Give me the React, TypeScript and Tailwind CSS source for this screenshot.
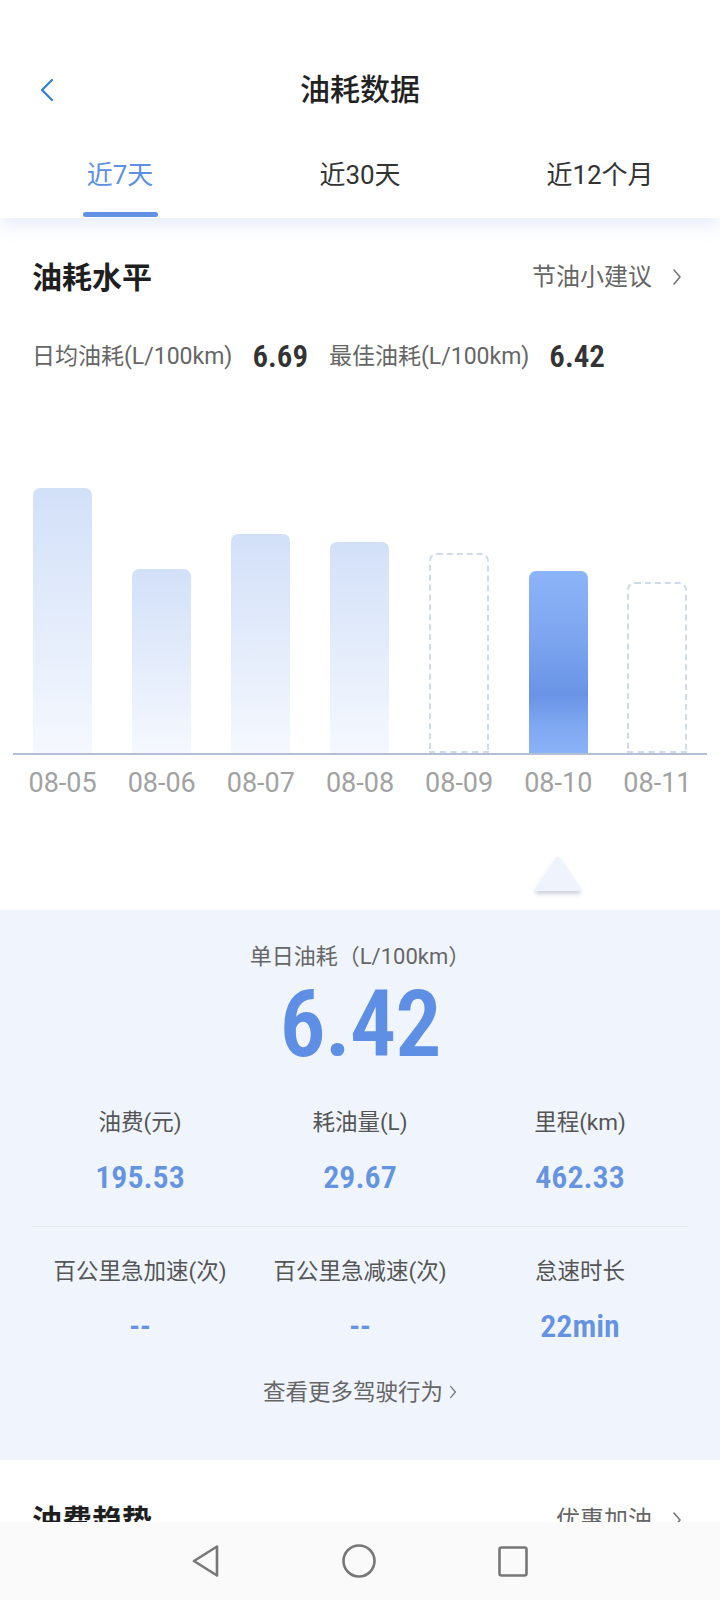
import React from "react";

const bars = [
  { date: "08-05", h: 265, kind: "light" },
  { date: "08-06", h: 184, kind: "light" },
  { date: "08-07", h: 219, kind: "light" },
  { date: "08-08", h: 211, kind: "light" },
  { date: "08-09", h: 200, kind: "empty" },
  { date: "08-10", h: 182, kind: "active" },
  { date: "08-11", h: 171, kind: "empty" },
];

const tabs = ["近7天", "近30天", "近12个月"];

function Chevron({ className }: { className?: string }) {
  return (
    <svg viewBox="0 0 10 18" className={className} fill="none" stroke="currentColor" strokeWidth="1.6" strokeLinecap="round" strokeLinejoin="round">
      <path d="M2 2l6 7-6 7" />
    </svg>
  );
}

function Stat({ label, value }: { label: string; value: string }) {
  return (
    <div className="flex flex-col items-center">
      <div className="text-[22.5px] leading-[32px] text-[#555]">{label}</div>
      <div className="mt-[19px] text-[32px] leading-[40px] font-semibold text-[#6693e0] font-['Roboto_Condensed','Liberation_Sans_Narrow','Roboto',sans-serif]">
        {value}
      </div>
    </div>
  );
}

export default function App() {
  return (
    <div className="w-[720px] h-[1600px] flex flex-col bg-white overflow-hidden font-['Roboto','Noto_Sans_CJK_SC',sans-serif]">
      <div className="h-[1522px] overflow-hidden flex flex-col">
        {/* Header + tabs */}
        <div className="relative z-10 bg-white shadow-[0_8px_16px_rgba(205,216,238,0.45)]">
          <div className="h-[50px]" />
          <div className="h-[80px] grid grid-cols-[1fr_auto_1fr] items-center">
            <div className="pl-[40px] text-[#2f7fd6]">
              <svg viewBox="0 0 14 24" className="w-[14px] h-[24px]" fill="none" stroke="currentColor" strokeWidth="2.2" strokeLinecap="round" strokeLinejoin="round">
                <path d="M12 2L2 12l10 10" />
              </svg>
            </div>
            <div className="text-[30px] leading-[40px] font-medium text-[#222]">油耗数据</div>
            <div />
          </div>
          <div className="h-[88px] grid grid-cols-3">
            {tabs.map((t, i) => (
              <div key={t} className="flex flex-col items-center pt-[27px]">
                <div className={`text-[26px] leading-[36px] ${i === 0 ? "text-[#5d8fe3]" : "text-[#333]"}`}>{t}</div>
                <div className={`mt-[19px] h-[5px] w-[75px] rounded-full ${i === 0 ? "bg-[#6391e4]" : "bg-transparent"}`} />
              </div>
            ))}
          </div>
        </div>

        {/* 油耗水平 */}
        <div className="pl-[32px] pr-[38px] pt-[39px]">
          <div className="h-[40px] flex items-center justify-between">
            <div className="text-[30px] font-bold text-[#1f1f1f]">油耗水平</div>
            <div className="flex items-center gap-[20px] text-[#666]">
              <span className="text-[24px]">节油小建议</span>
              <Chevron className="w-[10px] h-[18px] text-[#777]" />
            </div>
          </div>
          <div className="mt-[40px] h-[40px] flex items-center">
            <span className="text-[23px] text-[#666]">日均油耗(L/100km)</span>
            <span className="ml-[20px] text-[31px] font-semibold text-[#333] font-['Roboto_Condensed','Liberation_Sans_Narrow','Roboto',sans-serif]">6.69</span>
            <span className="ml-[21px] text-[23px] text-[#666]">最佳油耗(L/100km)</span>
            <span className="ml-[20px] text-[31px] font-semibold text-[#333] font-['Roboto_Condensed','Liberation_Sans_Narrow','Roboto',sans-serif]">6.42</span>
          </div>
        </div>

        {/* Chart */}
        <div className="px-[13px]">
          <div className="h-[376px] grid grid-cols-7 items-end">
            {bars.map((b) => (
              <div key={b.date} className="flex justify-center">
                {b.kind === "light" && (
                  <div className="w-[59px] rounded-t-[7px] bg-gradient-to-b from-[#d2e0f8] to-[#f5f8fe]" style={{ height: b.h }} />
                )}
                {b.kind === "active" && (
                  <div className="w-[59px] rounded-t-[7px] bg-[linear-gradient(to_bottom,#8cb4f8_0%,#7ea6f0_35%,#6994e6_68%,#7fa8f2_85%,#8ab2f7_100%)]" style={{ height: b.h }} />
                )}
                {b.kind === "empty" && (
                  <div className="w-[60px] rounded-t-[8px] border-2 border-dashed border-[#cfdaeb]" style={{ height: b.h }} />
                )}
              </div>
            ))}
          </div>
          <div className="h-[2px] bg-[#b3bfd3]" />
          <div className="mt-[12px] grid grid-cols-7">
            {bars.map((b) => (
              <div key={b.date} className="text-center text-[27px] leading-[32px] text-[#a2a2a2] font-['Roboto',sans-serif]">
                {b.date}
              </div>
            ))}
          </div>
          <div className="mt-[51px] grid grid-cols-7">
            {bars.map((b) => (
              <div key={b.date} className="flex justify-center">
                {b.kind === "active" && (
                  <svg viewBox="0 0 56 60" className="w-[56px] h-[60px]">
                    <defs>
                      <filter id="tri" x="-30%" y="-30%" width="160%" height="170%">
                        <feDropShadow dx="0" dy="3" stdDeviation="2" floodColor="#8e99ad" floodOpacity="0.45" />
                      </filter>
                    </defs>
                    <path d="M26.3 7.5a2 2 0 0 1 3.4 0l21 31a1.5 1.5 0 0 1-1.2 2.4H6.5a1.5 1.5 0 0 1-1.2-2.4z" fill="#eef3fc" filter="url(#tri)" />
                  </svg>
                )}
              </div>
            ))}
          </div>
        </div>

        {/* Detail panel */}
        <div className="h-[550px] shrink-0 bg-[#f0f5fd] pt-[31px] flex flex-col items-center">
          <div className="text-[22px] leading-[32px] text-[#666]">单日油耗（L/100km）</div>
          <div className="mt-[6px] text-[92px] leading-none font-semibold text-[#5f8fe4] tracking-[-1px] font-['Roboto_Condensed','Liberation_Sans_Narrow','Roboto',sans-serif]">
            6.42
          </div>
          <div className="mt-[35px] w-full px-[30px] grid grid-cols-3">
            <Stat label="油费(元)" value="195.53" />
            <Stat label="耗油量(L)" value="29.67" />
            <Stat label="里程(km)" value="462.33" />
          </div>
          <div className="mt-[29px] w-full px-[32px]">
            <div className="h-px bg-[#e2e9f4]" />
          </div>
          <div className="mt-[28px] w-full px-[30px] grid grid-cols-3">
            <Stat label="百公里急加速(次)" value="--" />
            <Stat label="百公里急减速(次)" value="--" />
            <Stat label="怠速时长" value="22min" />
          </div>
          <div className="mt-[30px] flex items-center gap-[6px] text-[#666]">
            <span className="text-[22.5px] leading-[32px]">查看更多驾驶行为</span>
            <Chevron className="w-[8px] h-[16px] text-[#777]" />
          </div>
        </div>

        {/* 油费趋势 */}
        <div className="pl-[32px] pr-[38px] pt-[40px]">
          <div className="h-[40px] flex items-center justify-between">
            <div className="text-[30px] font-bold text-[#1f1f1f]">油费趋势</div>
            <div className="flex items-center gap-[20px] text-[#666]">
              <span className="text-[24px]">优惠加油</span>
              <Chevron className="w-[10px] h-[18px] text-[#777]" />
            </div>
          </div>
        </div>
      </div>

      {/* System nav bar */}
      <div className="h-[78px] bg-[#fafafa] flex items-center justify-center gap-[120px] text-[#777]">
        <svg viewBox="0 0 30 34" className="w-[30px] h-[34px]" fill="none" stroke="currentColor" strokeWidth="2.6" strokeLinejoin="round">
          <path d="M26 2.5v29L3 17z" />
        </svg>
        <svg viewBox="0 0 36 36" className="w-[36px] h-[36px]" fill="none" stroke="currentColor" strokeWidth="2.6">
          <circle cx="18" cy="18" r="15.5" />
        </svg>
        <svg viewBox="0 0 32 32" className="w-[32px] h-[32px]" fill="none" stroke="currentColor" strokeWidth="2.6">
          <rect x="2.5" y="2.5" width="27" height="28" rx="2" />
        </svg>
      </div>
    </div>
  );
}
